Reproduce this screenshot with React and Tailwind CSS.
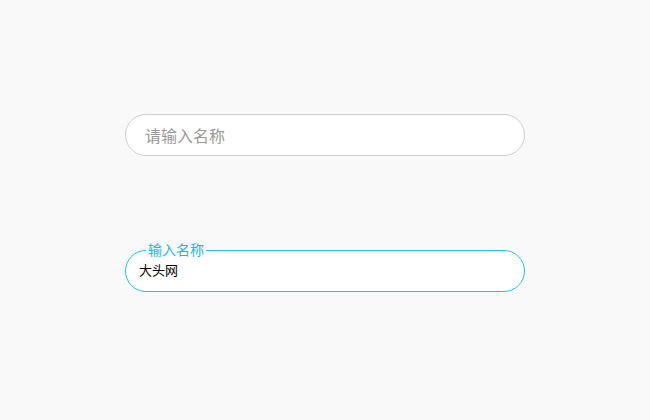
import React from "react";

const font = { fontFamily: '"Liberation Sans", "Noto Sans CJK SC", sans-serif' };

const App = () => {
  return (
    <div
      className="w-[650px] h-[420px] bg-[#f9f9f9] flex flex-col items-center pt-[114px]"
      style={font}
    >
      <div className="w-[400px] h-[42px] rounded-[21px] border border-[#cfcfcf] bg-white flex items-center px-[19px] pt-[4px]">
        <input
          className="w-full outline-none bg-transparent text-[16px] text-[#333] placeholder:text-[#999]"
          placeholder="请输入名称"
        />
      </div>

      <fieldset className="mt-[86px] w-[400px] h-[50px] rounded-[21px] border border-[#1ec0f5] bg-white px-[13px] m-0 min-w-0">
        <legend className="ml-[7px] px-[2px] text-[14px] leading-[16px] text-[#10b9f0]">
          输入名称
        </legend>
        <div className="text-[13px] leading-[16px] text-black mt-[5px]">大头网</div>
      </fieldset>
    </div>
  );
};

export default App;
